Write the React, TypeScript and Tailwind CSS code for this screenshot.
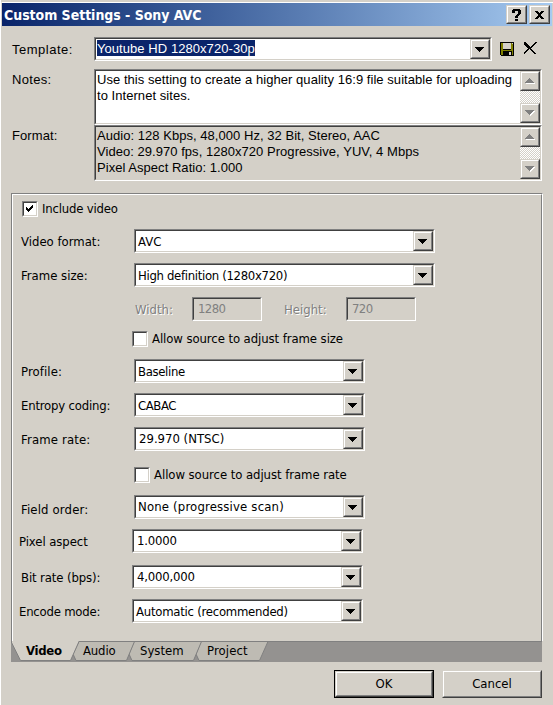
import type { ReactNode } from "react";
import clsx from "clsx";

const sunken =
  "border border-t-[#808080] border-l-[#808080] border-b-white border-r-white";
const sunkenInner =
  "border border-t-[#404040] border-l-[#404040] border-b-[#d4d0c8] border-r-[#d4d0c8]";
const tahoma = "font-['DejaVu_Sans_Condensed','DejaVu_Sans',sans-serif]";
const msSans = "font-['Liberation_Sans',sans-serif]";

function Raised({ className, children }: { className?: string; children?: ReactNode }) {
  return (
    <button
      className={clsx(
        "block shrink-0 border border-t-[#d4d0c8] border-l-[#d4d0c8] border-b-[#404040] border-r-[#404040] bg-[#d4d0c8]",
        className
      )}
    >
      <span className="flex h-full w-full items-center justify-center border border-t-white border-l-white border-b-[#808080] border-r-[#808080]">
        {children}
      </span>
    </button>
  );
}

function DropButton() {
  return (
    <Raised className="h-5 w-5">
      <svg width="9" height="5" shapeRendering="crispEdges" className="mt-px mr-px">
        <path d="M0 0h9v1h-1v1h-1v1h-1v1h-1v1h-1v-1h-1v-1h-1v-1h-1v-1h-1z" />
      </svg>
    </Raised>
  );
}

function Field({
  className,
  fill = "bg-white",
  children,
}: {
  className?: string;
  fill?: string;
  children?: ReactNode;
}) {
  return (
    <div className={clsx("shrink-0", sunken, className)}>
      <div className={clsx("flex h-full w-full", sunkenInner, fill)}>{children}</div>
    </div>
  );
}

interface SelectProps {
  value: string;
  width: string;
  textClass?: string;
}

function Select({ value, width, textClass }: SelectProps) {
  return (
    <Field className={clsx("h-6", width)}>
      <span className={clsx("flex-1 whitespace-nowrap", textClass ?? "pl-[2px] leading-[22px]")}>
        {value}
      </span>
      <DropButton />
    </Field>
  );
}

interface RowProps {
  label: string;
  className: string;
  labelClass: string;
  children: ReactNode;
}

function Row({ label, className, labelClass, children }: RowProps) {
  return (
    <div className={clsx("flex h-6", className)}>
      <label className={clsx("shrink-0 whitespace-nowrap leading-[26px]", labelClass)}>
        {label}
      </label>
      {children}
    </div>
  );
}

function Checkbox({
  label,
  checked,
  className,
  textClass,
}: {
  label: string;
  checked?: boolean;
  className: string;
  textClass: string;
}) {
  return (
    <div className={clsx("flex h-4", className)}>
      <Field className="h-4 w-4">
        {checked && (
          <svg width="12" height="12" shapeRendering="crispEdges">
            <path d="M2 4h1v1h1v1h1v-1h1v-1h1v-1h1v-1h1v3h-1v1h-1v1h-1v1h-1v1h-1v-1h-1v-1h-1z" />
          </svg>
        )}
      </Field>
      <span className={clsx("whitespace-nowrap leading-4", textClass)}>{label}</span>
    </div>
  );
}

function ScrollArrow({ up }: { up?: boolean }) {
  const d = up
    ? "M4 0h1v1h1v1h1v1h1v1h1v1h-9v-1h1v-1h1v-1h1v-1h1z"
    : "M0 0h9v1h-1v1h-1v1h-1v1h-1v1h-1v-1h-1v-1h-1v-1h-1v-1h-1z";
  return (
    <Raised className="h-5 w-5">
      <svg width="10" height="6" shapeRendering="crispEdges">
        <path d={d} fill="#fff" transform="translate(1 1)" />
        <path d={d} fill="#808080" />
      </svg>
    </Raised>
  );
}

function ScrollBar() {
  return (
    <div className="flex w-5 shrink-0 flex-col justify-between bg-[#eae8e3] bg-[repeating-conic-gradient(#fff_0_25%,#d4d0c8_0_50%)] bg-[length:2px_2px]">
      <ScrollArrow up />
      <ScrollArrow />
    </div>
  );
}

function TitleBar() {
  return (
    <div className="mr-px flex h-[23px] items-start bg-gradient-to-r from-[#0a246a] to-[#a6caf0] pt-[2px] pr-[2px] pl-[2px]">
      <h1 className="flex-1 whitespace-nowrap text-[14px] leading-[21px] font-bold tracking-[-0.04px] text-white">
        Custom Settings - Sony AVC
      </h1>
      <Raised className="h-[19px] w-[21px]">
        <svg width="9" height="12" shapeRendering="crispEdges">
          <path d="M1 0h7v1h1v4h-1v1h-1v1h-1v2h-3v-2h1v-1h1v-1h1v-3h-3v2h-3v-3h1zM3 10h3v2h-3z" />
        </svg>
      </Raised>
      <Raised className="ml-[2px] h-[19px] w-[21px]">
        <svg width="9" height="8" shapeRendering="crispEdges">
          <path d="M0 0h2v1h1v1h1v1h1v-1h1v-1h1v-1h2v1h-1v1h-1v1h-1v2h1v1h1v1h1v1h-2v-1h-1v-1h-1v-1h-1v1h-1v1h-1v1h-2v-1h1v-1h1v-1h1v-2h-1v-1h-1v-1h-1z" />
          <path d="M1 0h2v1h1v1h1v-1h1v-1h2v1h-1v1h-1v4h1v1h1v1h-2v-1h-1v-1h-1v1h-1v1h-2v-1h1v-1h1v-4h-1v-1h-1z" />
        </svg>
      </Raised>
    </div>
  );
}

function SaveIcon() {
  return (
    <svg width="14" height="14" shapeRendering="crispEdges" className="shrink-0">
      <path d="M0 0h14v14H1v-1H0z" />
      <path d="M1 1h2v7h8V1h2v12H1z" fill="#808000" />
      <path d="M3 1h8v6H3z" fill="#d4d0c8" />
      <path d="M3 9h9v4H3z" />
      <path d="M9 10h2v3H9z" fill="#d4d0c8" />
      <path d="M12 1h1v1h-1z" fill="#d4d0c8" />
    </svg>
  );
}

function DeleteIcon() {
  return (
    <svg width="14" height="13" shapeRendering="crispEdges" className="shrink-0">
      <path d="M0 0h2v1h1v1h1v1h1v1h1v1h1v-1h1v-1h1v-1h1v-1h1v-1h2v1h-1v1h-1v1h-1v1h-1v1h-1v1h-1v1h1v1h1v1h1v1h1v1h1v1h-2v-1h-1v-1h-1v-1h-1v-1h-1v-1h-1v1h-1v1h-1v1h-1v1h-1v1h-2v-1h1v-1h1v-1h1v-1h1v-1h1v-1h-1v-1h-1v-1h-1v-1h-1v-1h-1z" />
    </svg>
  );
}

function Tabs() {
  return (
    <div className="relative h-[21px] bg-[#949290]">
      <svg width="531" height="21" className="absolute inset-0">
        <path d="M185 13L188 19.5H248.5L257 .5H190z" fill="#bebbb3" stroke="#808080" />
        <path d="M118 13L121 19.5H182.5L190.5 .5H123z" fill="#bebbb3" stroke="#808080" />
        <path d="M62 13L65 19.5H115.5L123.5 .5H68z" fill="#bebbb3" stroke="#808080" />
        <path d="M0 .5L9.5 19.5H59.5L68 .5z" fill="#d4d0c8" stroke="#808080" />
        <path d="M68 .5H531" stroke="#808080" />
        <path d="M1 .5H67.5" stroke="#d4d0c8" />
      </svg>
      <div className="relative flex text-[13px] leading-[20px]">
        <span className="w-[57px] pl-[15px] font-bold tracking-[-0.3px]">Video</span>
        <span className="w-[57px] pl-[15px] tracking-[-0.15px]">Audio</span>
        <span className="w-[67px] pl-[15px]">System</span>
        <span className="pl-[15px] tracking-[0.1px]">Project</span>
      </div>
    </div>
  );
}

export default function App() {
  return (
    <div
      className={clsx(
        "h-[705px] w-[553px] overflow-hidden border-l border-white bg-[#d4d0c8] pt-[2px] text-[13px] text-black",
        tahoma
      )}
    >
      <div className="border-t border-l border-t-white border-l-[#d4d0c8]">
        <TitleBar />
      </div>

      <div className={clsx("pl-[11px]", msSans)}>
        <div className="mt-[11px] flex h-6">
          <label className="w-[82px] leading-[25px] tracking-[0.5px]">Template:</label>
          <Field className="h-6 w-[398px]">
            <div className="flex-1 pt-px pl-px">
              <span className="inline-block h-4 w-[158px] whitespace-nowrap bg-[#0a246a] align-top leading-[18px] tracking-[0.06px] text-white">
                Youtube HD 1280x720-30p
              </span>
            </div>
            <DropButton />
          </Field>
          <div className="flex gap-[10px] pt-[5px] pl-2">
            <SaveIcon />
            <DeleteIcon />
          </div>
        </div>

        <div className="mt-2 flex h-14">
          <label className="w-[82px] pt-[3px] leading-4 tracking-[0.3px]">Notes:</label>
          <Field className="w-[448px]">
            <p className="flex-1 pt-px pl-px leading-4 tracking-[0.05px] whitespace-nowrap">
              Use this setting to create a higher quality 16:9 file suitable for uploading
              <br />
              to Internet sites.
            </p>
            <ScrollBar />
          </Field>
        </div>

        <div className="flex h-14">
          <label className="w-[82px] pt-[3px] leading-4 tracking-[0.1px]">Format:</label>
          <Field className="w-[448px]" fill="bg-[#d4d0c8]">
            <p className="flex-1 pt-px pl-px leading-4 tracking-[0.04px] whitespace-nowrap">
              Audio: 128 Kbps, 48,000 Hz, 32 Bit, Stereo, AAC
              <br />
              Video: 29.970 fps, 1280x720 Progressive, YUV, 4 Mbps
              <br />
              Pixel Aspect Ratio: 1.000
            </p>
            <ScrollBar />
          </Field>
        </div>
      </div>

      <div className="mt-3 ml-[10px] w-[532px]">
        <div className="h-[448px] border border-t-[#808080] border-r-white border-b-0 border-l-[#808080]">
          <div className="h-full border border-t-white border-r-[#808080] border-b-0 border-l-white pl-[7px]">
            <Checkbox
              label="Include video"
              checked
              className="mt-[6px] pl-[2px]"
              textClass="pl-1 tracking-[-0.2px]"
            />
            <Row label="Video format:" className="mt-3" labelClass="w-[114px] pl-px">
              <Select value="AVC" width="w-[301px]" />
            </Row>
            <Row label="Frame size:" className="mt-[10px]" labelClass="w-[114px] pl-px">
              <Select
                value="High definition (1280x720)"
                width="w-[301px]"
                textClass="pl-[2px] leading-[22px] tracking-[-0.32px]"
              />
            </Row>
            <div className="mt-[10px] flex h-6 pl-[115px] leading-[26px] text-[#808080]">
              <label className="w-[57px] [text-shadow:1px_1px_0_#fff]">Width:</label>
              <Field className="w-[70px]" fill="bg-[#d4d0c8]">
                <span className="pl-1 leading-[20px] tracking-[-0.6px]">1280</span>
              </Field>
              <label className="w-[84px] pl-[22px] [text-shadow:1px_1px_0_#fff]">Height:</label>
              <Field className="w-[70px]" fill="bg-[#d4d0c8]">
                <span className="pl-1 leading-[20px] tracking-[-0.6px]">720</span>
              </Field>
            </div>
            <Checkbox
              label="Allow source to adjust frame size"
              className="mt-[10px] pl-[112px]"
              textClass="pl-1 tracking-[-0.08px]"
            />
            <Row label="Profile:" className="mt-3" labelClass="w-[114px] pl-px tracking-[0.1px]">
              <Select
                value="Baseline"
                width="w-[231px]"
                textClass="pl-[2px] leading-[22px] tracking-[-0.35px]"
              />
            </Row>
            <Row
              label="Entropy coding:"
              className="mt-[10px]"
              labelClass="w-[114px] pl-px tracking-[-0.2px]"
            >
              <Select
                value="CABAC"
                width="w-[231px]"
                textClass="pl-[2px] leading-[22px] tracking-[-0.4px]"
              />
            </Row>
            <Row
              label="Frame rate:"
              className="mt-[10px]"
              labelClass="w-[114px] pl-px tracking-[0.15px]"
            >
              <Select
                value="29.970 (NTSC)"
                width="w-[231px]"
                textClass="pl-[3px] leading-[20px]"
              />
            </Row>
            <Checkbox
              label="Allow source to adjust frame rate"
              className="mt-4 pl-[114px]"
              textClass="pl-1 tracking-[-0.06px]"
            />
            <Row
              label="Field order:"
              className="mt-3"
              labelClass="w-[114px] pl-px pt-[2px] tracking-[0.15px]"
            >
              <Select
                value="None (progressive scan)"
                width="w-[231px]"
                textClass="pl-[2px] leading-[20px] tracking-[0.17px]"
              />
            </Row>
            <Row
              label="Pixel aspect"
              className="mt-[10px]"
              labelClass="w-[112px] -ml-px mr-px tracking-[-0.08px]"
            >
              <Select
                value="1.0000"
                width="w-[231px]"
                textClass="pl-[3px] leading-[20px] tracking-[-0.2px]"
              />
            </Row>
            <Row
              label="Bit rate (bps):"
              className="mt-3"
              labelClass="w-[112px] pl-px tracking-[-0.12px]"
            >
              <Select
                value="4,000,000"
                width="w-[231px]"
                textClass="pl-[3px] leading-[20px] tracking-[-0.2px]"
              />
            </Row>
            <Row
              label="Encode mode:"
              className="mt-[10px]"
              labelClass="w-[112px] -ml-px mr-px tracking-[-0.22px]"
            >
              <Select
                value="Automatic (recommended)"
                width="w-[231px]"
                textClass="pl-[2px] leading-[22px] tracking-[-0.25px]"
              />
            </Row>
          </div>
        </div>
        <div className="w-[531px]">
          <Tabs />
        </div>
      </div>

      <div className="mt-2 flex h-7 gap-2 pl-[333px]">
        <div className="w-[100px] border border-black">
          <Raised className="h-full w-full">OK</Raised>
        </div>
        <Raised className="h-full w-[100px]">Cancel</Raised>
      </div>
    </div>
  );
}
